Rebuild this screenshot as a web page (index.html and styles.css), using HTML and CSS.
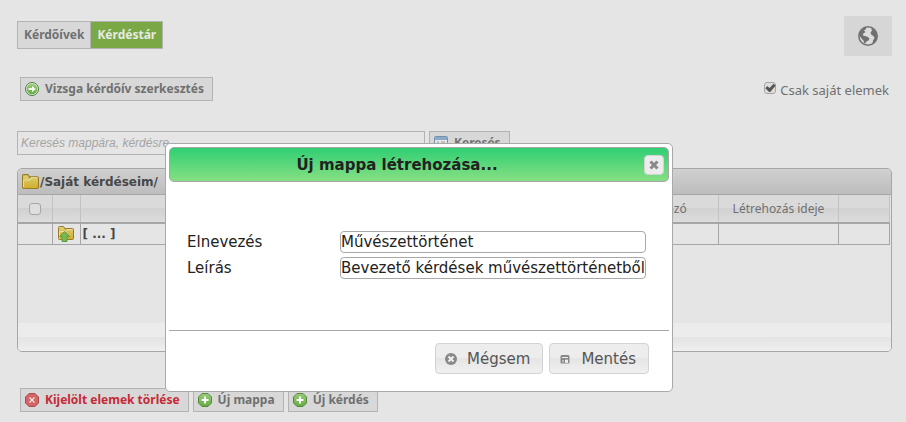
FILE: index.html
```html
<!DOCTYPE html>
<html lang="hu">
<head>
<meta charset="utf-8">
<title>Kérdéstár</title>
<link rel="stylesheet" href="styles.css">
</head>
<body>
<svg class="defs" aria-hidden="true">
  <defs>
    <linearGradient id="gold" x1="0" y1="0" x2="0" y2="1"><stop offset="0" stop-color="#dfcf7c"/><stop offset="1" stop-color="#d0ae2c"/></linearGradient>
    <linearGradient id="leaf" x1="0" y1="0" x2="0" y2="1"><stop offset="0" stop-color="#9bcb78"/><stop offset="1" stop-color="#62ad42"/></linearGradient>
    <symbol id="folder" viewBox="0 0 16 14">
      <path d="M.5 12.5V1.5Q.5.5 1.5.5H5.500L7.500 3.500V2.500H14.500Q15.500 2.500 15.500 3.500V12.500Q15.500 13.500 14.500 13.500H1.500Q.5 13.500.5 12.500Z" fill="url(#gold)" stroke="#967c26"/>
      <path d="M1.500 12.500V5.500H7L9 3.500H14.500" fill="none" stroke="#eadf9f"/>
    </symbol>
    <symbol id="octagon" viewBox="0 0 14 14"><path d="M4 .5H10L13.500 4V10L10 13.500H4L.5 10V4Z"/></symbol>
  </defs>
</svg>
<main class="page">
  <header class="top">
    <nav class="tabs">
      <a class="tab" href="#">Kérdőívek</a><a class="tab tab-active" href="#">Kérdéstár</a>
    </nav>
    <button class="globe" type="button" aria-label="Nyelv">
      <svg width="20" height="20" viewBox="0 0 20 20"><circle cx="10" cy="10" r="9.200" fill="#dcdcdc" stroke="#707070" stroke-width="1.500"/><path d="M1.500 7 3 4.500 6 2 8.500 1 8 3 6 4.500 7.500 6 5.500 7.500 4.500 9 6.500 10 9 10.500 11.500 12.500 10.500 14.500 8.500 15.500 7 17.500 6 17 5.500 14.500 3 12 1 9Z" fill="#707070"/><path d="M13 2 16 3.500 19 7.500 19.200 11 17 16 14.500 17.500 15 14.500 16.500 12 15.500 10 13.500 9 12.500 6.500 14 4.500Z" fill="#707070"/></svg>
    </button>
  </header>
  <div class="tools">
    <button class="btn" type="button">
      <svg class="icon" viewBox="0 0 14 14"><circle cx="7" cy="7" r="6.500" fill="#e3eede" stroke="#4c7a3c"/><circle cx="7" cy="7" r="5.300" fill="url(#leaf)"/><path d="M3.500 6H7V3.800L10.800 7 7 10.200V8H3.500Z" fill="#f4f8f1"/></svg>
      Vizsga kérdőív szerkesztés
    </button>
    <label class="own"><input class="check" type="checkbox" checked>Csak saját elemek</label>
  </div>
  <form class="search">
    <input class="query" type="text" aria-label="Keresés" placeholder="Keresés mappára, kérdésre">
    <button class="btn" type="button">
      <svg class="icon" viewBox="0 0 14 14"><rect x=".5" y=".5" width="13" height="12" rx="1" fill="#e6e8ea" stroke="#7193b1"/><path d="M1 2.500H13" stroke="#8baac6" stroke-width="3"/><path d="M3 6H5M7 6H11M3 8H5M7 8H11" stroke="#999"/></svg>
      Keresés
    </button>
  </form>
  <section class="panel">
    <h2 class="panel-title"><svg width="17" height="15"><use href="#folder" width="17" height="15"/></svg>/Saját kérdéseim/</h2>
    <table class="grid">
      <colgroup><col class="c-check"><col class="c-icon"><col><col class="c-date"><col class="c-date"><col class="c-end"></colgroup>
      <thead>
        <tr><th><input class="check" type="checkbox" aria-label="Összes kijelölése"></th><th></th><th></th><th>Létrehozó</th><th>Létrehozás ideje</th><th></th></tr>
      </thead>
      <tbody>
        <tr><td></td><td class="cell-icon"><svg width="17" height="16" viewBox="0 0 17 16"><use href="#folder" width="16" height="14"/><path d="M6.500 5.500 11.500 10.500H9V15.500H4V10.500H1.500Z" fill="#79b84f" stroke="#5f9c45"/></svg></td><td class="name">[ ... ]</td><td></td><td></td><td></td></tr>
      </tbody>
    </table>
    <div class="space"></div>
    <div class="band"></div>
    <div class="pager"></div>
  </section>
  <footer class="actions">
    <button class="btn btn-danger" type="button">
      <svg class="icon" viewBox="0 0 14 14"><use href="#octagon" fill="#d56565" stroke="#ab4a4a"/><path d="M4.500 4.500 9.500 9.500M9.500 4.500 4.500 9.500" stroke="#f5e6e6" stroke-width="1.300"/></svg>
      Kijelölt elemek törlése
    </button>
    <button class="btn" type="button">
      <svg class="icon" viewBox="0 0 14 14"><use href="#octagon" fill="url(#leaf)" stroke="#58883f"/><path d="M7 3.500V10.500M3.500 7H10.500" stroke="#fff" stroke-width="2"/></svg>
      Új mappa
    </button>
    <button class="btn" type="button">
      <svg class="icon" viewBox="0 0 14 14"><use href="#octagon" fill="url(#leaf)" stroke="#58883f"/><path d="M7 3.500V10.500M3.500 7H10.500" stroke="#fff" stroke-width="2"/></svg>
      Új kérdés
    </button>
  </footer>
</main>
<div class="dialog" role="dialog" aria-labelledby="dialog-title">
  <header class="dialog-head">
    <h1 class="dialog-title" id="dialog-title">Új mappa létrehozása...</h1>
    <button class="close" type="button" aria-label="Bezárás"><svg width="10" height="10" viewBox="0 0 10 10"><path d="M1.500 1.500 8.500 8.500M8.500 1.500 1.500 8.500" stroke="#888" stroke-width="3"/></svg></button>
  </header>
  <form class="fields">
    <label for="name">Elnevezés</label><input class="field" id="name" type="text" value="Művészettörténet">
    <label for="desc">Leírás</label><input class="field" id="desc" type="text" value="Bevezető kérdések művészettörténetből">
  </form>
  <footer class="dialog-foot">
    <button class="choice" type="button"><svg width="12" height="12" viewBox="0 0 12 12"><circle cx="6" cy="6" r="6" fill="#888"/><path d="M3.500 3.500 8.500 8.500M8.500 3.500 3.500 8.500" stroke="#f0f0f0" stroke-width="2"/></svg>Mégsem</button>
    <button class="choice" type="button"><svg width="12" height="12" viewBox="0 0 12 12"><path d="M3 2H9Q10.500 2 10.500 3.500V9.500Q10.500 10.500 9.500 10.500H2.500Q1.500 10.500 1.500 9.500V3.500Q1.500 2 3 2Z" fill="#888"/><path d="M3 4.500H9M4 7V9.500M6.500 7H8.500V9.500H6.500Z" fill="#eee" stroke="#eee"/></svg>Mentés</button>
  </footer>
</div>
</body>
</html>
```
FILE: styles.css
```css
*, ::before { box-sizing: border-box; }
body {
  margin: 0;
  background: #e5e5e5;
  color: #707070;
  font: 12px/16px "Noto Sans", sans-serif;
}
.defs { position: absolute; width: 0; height: 0; }
button, input { margin: 0; font: inherit; color: inherit; }
.page { padding: 16px 14px 10px 17px; }
.top { display: flex; justify-content: space-between; align-items: flex-start; }
.tabs { display: flex; margin-top: 5px; border: 1px solid #b3b3b3; }
.tab {
  padding: 5px 6px;
  background: #d8d8d8;
  color: #707070;
  font-weight: bold;
  text-decoration: none;
}
.tab-active { background: #7aa845; color: #e6e9e2; border-left: 1px solid #b3b3b3; }
.globe {
  display: flex;
  align-items: center;
  justify-content: center;
  width: 48px;
  height: 40px;
  padding: 0;
  border: 0;
  background: #d6d6d6;
}
.tools { display: flex; justify-content: space-between; margin-top: 21px; padding: 0 3px; }
.btn {
  display: flex;
  align-items: center;
  gap: 6px;
  height: 24px;
  padding: 0 8px 0 4px;
  border: 1px solid #b3b3b3;
  background: #d8d8d8;
  font-weight: bold;
  white-space: nowrap;
}
.btn-danger { color: #c62a35; }
.icon { width: 14px; height: 14px; }
.own { display: flex; align-items: flex-start; gap: 4px; padding-top: 5px; font-size: 13px; }
.check {
  appearance: none;
  width: 12px;
  height: 12px;
  border: 1px solid #a6a6a6;
  border-radius: 3px;
  background: #dedede;
}
.check:checked::before {
  content: "";
  display: block;
  width: 9px;
  height: 6px;
  margin: 1px 0 0 1px;
  border: solid #555;
  border-width: 0 0 3px 3px;
  transform: rotate(-48deg);
}
.search { display: flex; gap: 4px; margin-top: 30px; }
.query {
  width: 408px;
  height: 24px;
  padding: 0 3px;
  border: 1px solid #b3b3b3;
  background: #e5e5e5;
  font: italic 12px "Liberation Sans", sans-serif;
}
.query::placeholder { color: #a4a4a4; }
.panel { margin-top: 13px; border: 1px solid #a6a6a6; border-radius: 5px; overflow: hidden; }
.panel-title {
  display: flex;
  align-items: center;
  gap: 1px;
  height: 26px;
  margin: 0;
  padding-left: 4px;
  border-bottom: 1px solid #a6a6a6;
  background: linear-gradient(#d0d0d0, #bdbdbd);
  color: #484848;
  font: bold 12px "DejaVu Sans", sans-serif;
}
.grid { width: calc(100% - 1px); table-layout: fixed; border-collapse: collapse; }
.c-check { width: 34px; }
.c-icon { width: 28px; }
.c-date { width: 120px; }
.c-end { width: 51px; }
th {
  height: 28px;
  padding: 0;
  border-right: 1px solid #c2c2c2;
  border-bottom: 2px solid #a6a6a6;
  background: linear-gradient(#dadada 50%, #d1d1d1 50%, #dcdcdc);
  font-weight: normal;
}
th .check { display: block; margin: 0 auto; }
td {
  height: 21px;
  padding: 0 2px;
  border-right: 1px solid #a6a6a6;
  border-bottom: 1px solid #a6a6a6;
}
.cell-icon svg { display: block; margin: 0 auto; }
.name { color: #484848; font: bold 12px "DejaVu Sans", sans-serif; }
.space { height: 78px; }
.band { height: 14px; background: #ececec; }
.pager { height: 14px; background: linear-gradient(#e3e3e3, #efefef); }
.actions { display: flex; gap: 4px; margin: 36px 3px 0; }
.dialog {
  position: absolute;
  top: 143px;
  left: 165px;
  width: 508px;
  padding: 3px;
  border: 1px solid #a9a9a9;
  border-radius: 5px;
  background: #fff;
  color: #222;
  font: 15px/22px "DejaVu Sans", sans-serif;
}
.dialog-head {
  display: flex;
  align-items: center;
  gap: 24px;
  height: 35px;
  padding: 0 4px;
  border: 1px solid #a6a6a6;
  border-radius: 5px;
  background: linear-gradient(#31ce74, #85e082);
}
.dialog-title { flex: 1; margin: 0; font-size: 15px; text-align: center; }
.close {
  display: flex;
  align-items: center;
  justify-content: center;
  width: 20px;
  height: 20px;
  padding: 0;
  border: 1px solid #d3d3d3;
  border-radius: 4px;
  background: #ececec;
}
.fields {
  display: grid;
  grid-template-columns: 149px 306px;
  gap: 4px;
  padding: 49px 0 51px 18px;
}
.field {
  width: 100%;
  height: 22px;
  padding: 0;
  border: 1px solid #a9a9a9;
  border-radius: 4px;
  background: #fff;
}
.dialog-foot {
  display: flex;
  justify-content: flex-end;
  gap: 6px;
  padding: 12px 20px 14px 0;
  border-top: 1px solid #a9a9a9;
}
.choice {
  display: flex;
  align-items: center;
  gap: 10px;
  height: 31px;
  padding: 0 12px 0 9px;
  border: 1px solid #d3d3d3;
  border-radius: 4px;
  background: linear-gradient(#ededed 50%, #e5e5e5 50%, #f0f0f0);
  color: #555;
}
```
